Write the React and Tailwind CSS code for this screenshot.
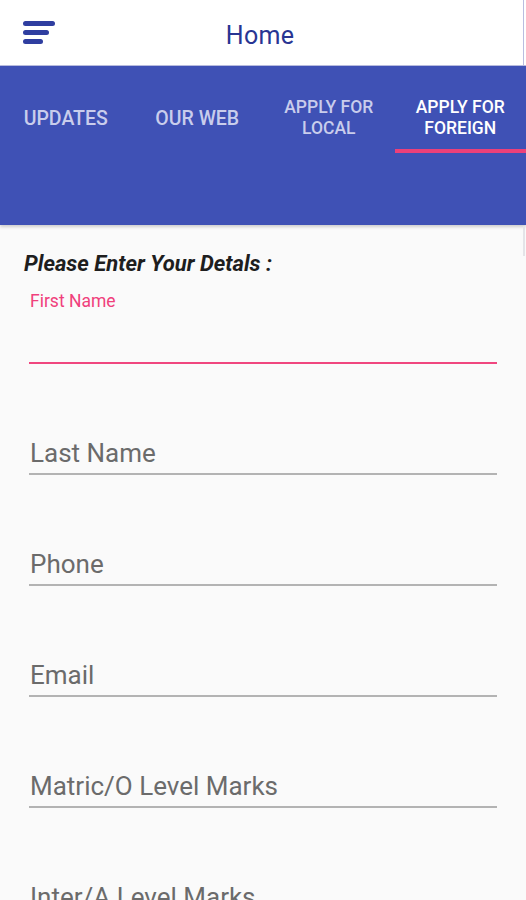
import React from "react";

const Field = ({ label }) => (
  <div className="mx-[29px] mt-[64px] h-[47px] flex flex-col justify-end">
    <div className="text-[26px] leading-[26px] text-[#6b6b6b] pb-[7px] pl-[1px]">{label}</div>
    <div className="h-[2px] bg-[#b3b3b3]" />
  </div>
);

export default function App() {
  return (
    <div
      className="w-[526px] h-[900px] overflow-hidden bg-[#fafafa] relative"
      style={{ fontFamily: "Roboto, 'Noto Sans', sans-serif" }}
    >
      <div className="h-[66px] bg-white border-b-[1px] border-[#b9bde0] flex items-center relative">
        <svg className="ml-[22px]" width="34" height="28" viewBox="0 0 34 28">
          <line x1="3.5" y1="4.5" x2="30.5" y2="4.5" stroke="#2f3ea0" strokeWidth="5" strokeLinecap="round" />
          <line x1="3.5" y1="13.5" x2="24.5" y2="13.5" stroke="#2f3ea0" strokeWidth="5" strokeLinecap="round" />
          <line x1="3.5" y1="22.5" x2="18.5" y2="22.5" stroke="#2f3ea0" strokeWidth="5" strokeLinecap="round" />
        </svg>
        <div className="absolute left-0 right-0 top-[3px] h-[66px] flex items-center justify-center pr-[6px]">
          <span className="text-[25px] text-[#283593] tracking-[0.3px]">Home</span>
        </div>
        <div className="absolute right-[2px] top-0 h-[66px] w-[1px] bg-[#b9bde0]" />
      </div>
      <div className="h-[159px] bg-[#3f51b5] shadow-[0_2px_3px_rgba(0,0,0,0.18)] relative pt-[18px]">
        <div className="grid grid-cols-4 h-[68px]">
          {[
            ["UPDATES", false, false],
            ["OUR WEB", false, false],
            ["APPLY FOR\nLOCAL", false, true],
            ["APPLY FOR\nFOREIGN", true, true],
          ].map(([t, active, two], i) => (
            <div key={i} className="relative flex items-center justify-center">
              <span
                className={`whitespace-pre-line text-center font-medium leading-[21px] ${
                  two ? "text-[17.5px]" : "text-[19.5px]"
                } ${active ? "text-white" : "text-[#c9cdec]"}`}
              >
                {t}
              </span>
              {active && <div className="absolute left-0 right-0 bottom-[-1px] h-[4px] bg-[#ec407a]" />}
            </div>
          ))}
        </div>
      </div>
      <div className="absolute right-[1px] top-[226px] h-[30px] w-[2px] bg-[#e4e4e8]" />
      <div className="pt-[27px]">
        <div className="pl-[24px] text-[22px] leading-[24px] font-bold italic text-[#1e1e1e]">
          Please Enter Your Detals :
        </div>
        <div className="mx-[29px] mt-[15px]">
          <div className="text-[17.5px] leading-[20px] text-[#f0407c] pl-[1px]">First Name</div>
          <div className="h-[51px]" />
          <div className="h-[2px] bg-[#f0467f]" />
        </div>
        <Field label="Last Name" />
        <Field label="Phone" />
        <Field label="Email" />
        <Field label="Matric/O Level Marks" />
        <Field label="Inter/A Level Marks" />
      </div>
    </div>
  );
}
